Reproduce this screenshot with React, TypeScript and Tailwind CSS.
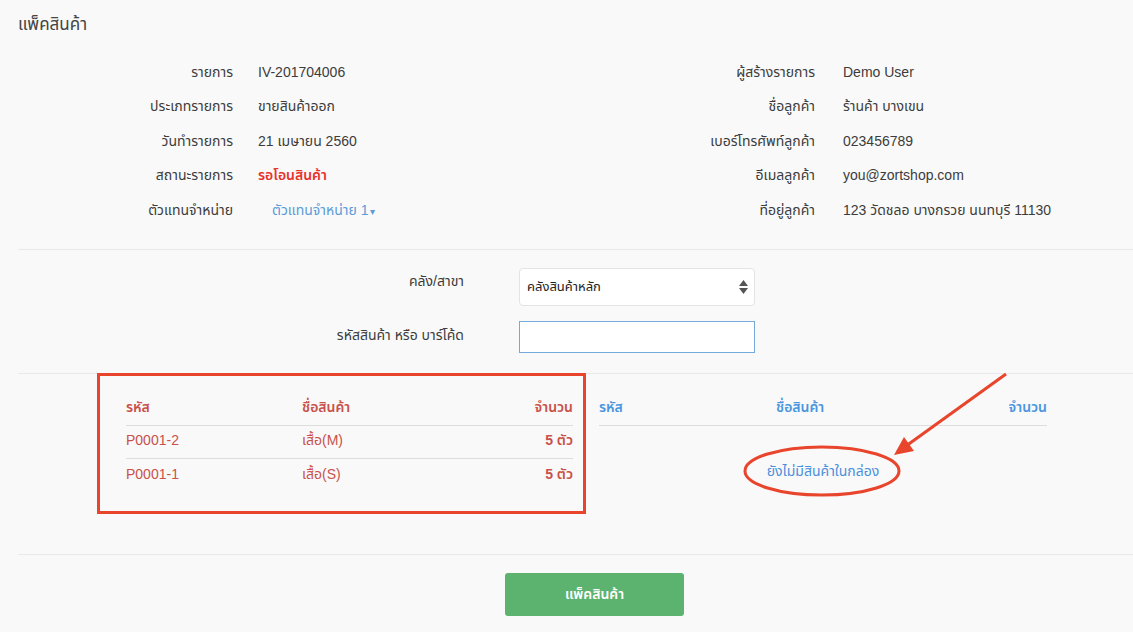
import React from 'react';

const font = { fontFamily: '"Liberation Sans", "Noto Sans", "Noto Sans Thai", sans-serif' };

const leftInfo: [string, React.ReactNode][] = [
    ['รายการ', 'IV-201704006'],
    ['ประเภทรายการ', 'ขายสินค้าออก'],
    ['วันทำรายการ', '21 เมษายน 2560'],
    ['สถานะรายการ', <span className="font-semibold text-[#e8322c]">รอโอนสินค้า</span>],
    [
        'ตัวแทนจำหน่าย',
        <span className="pl-[14px] text-[#5b9bd8]">
            ตัวแทนจำหน่าย 1<span className="ml-[2px] text-[10px] align-middle">▾</span>
        </span>,
    ],
];

const rightInfo: [string, string][] = [
    ['ผู้สร้างรายการ', 'Demo User'],
    ['ชื่อลูกค้า', 'ร้านค้า บางเขน'],
    ['เบอร์โทรศัพท์ลูกค้า', '023456789'],
    ['อีเมลลูกค้า', 'you@zortshop.com'],
    ['ที่อยู่ลูกค้า', '123 วัดชลอ บางกรวย นนทบุรี 11130'],
];

const items = [
    { code: 'P0001-2', name: 'เสื้อ(M)', qty: '5 ตัว' },
    { code: 'P0001-1', name: 'เสื้อ(S)', qty: '5 ตัว' },
];

function InfoRow({ label, value, labelWidth, gap }: { label: string; value: React.ReactNode; labelWidth: string; gap: string }) {
    return (
        <div className="flex h-[34.5px] items-center">
            <div className={`${labelWidth} text-right`}>{label}</div>
            <div className={gap}>{value}</div>
        </div>
    );
}

export default function App() {
    return (
        <div className="relative h-[632px] w-[1133px] overflow-hidden bg-[#f9f9f9] text-[14px] text-[#3c3c3c]" style={font}>
            <div className="pl-[18px]">
                <h1 className="pt-[15px] text-[17px] leading-[20px] text-[#444]">แพ็คสินค้า</h1>

                {/* info */}
                <div className="mt-[20px] flex">
                    <div className="w-[548px]">
                        {leftInfo.map(([l, v]) => (
                            <InfoRow key={l} label={l} value={v} labelWidth="w-[215px]" gap="ml-[25px]" />
                        ))}
                    </div>
                    <div>
                        {rightInfo.map(([l, v]) => (
                            <InfoRow key={l} label={l} value={v} labelWidth="w-[249px]" gap="ml-[28px]" />
                        ))}
                    </div>
                </div>

                <div className="mt-[21px] h-px bg-[#e9e9e9]" />

                {/* form */}
                <div className="pt-[18px]">
                    <div className="flex h-[38px]">
                        <div className="w-[446px] pt-[3px] text-right">คลัง/สาขา</div>
                        <div className="ml-[55px] flex w-[236px] items-center justify-between rounded-[4px] border border-[#e4e4e4] bg-white pl-[7px] pr-[6px] text-[13px] text-[#222]">
                            <span>คลังสินค้าหลัก</span>
                            <svg width="9" height="14" viewBox="0 0 9 14">
                                <path d="M4.5 0L9 6H0z" fill="#555" />
                                <path d="M0 8h9l-4.5 6z" fill="#555" />
                            </svg>
                        </div>
                    </div>
                    <div className="mt-[15px] flex h-[32px]">
                        <div className="w-[446px] pt-[4px] text-right">รหัสสินค้า หรือ บาร์โค้ด</div>
                        <div className="ml-[55px] w-[236px] border border-[#74a9dc] bg-white" />
                    </div>
                </div>

                <div className="mt-[20px] h-px bg-[#e9e9e9]" />

                {/* tables */}
                <div className="flex pl-[108px] pt-[18px]">
                    <div className="w-[447px] text-[#c9514a]">
                        <div className="flex h-[34px] items-center border-b border-[#dddddd] pb-[2px] font-semibold">
                            <span className="w-[176px]">รหัส</span>
                            <span className="flex-1">ชื่อสินค้า</span>
                            <span>จำนวน</span>
                        </div>
                        {items.map((it, i) => (
                            <div
                                key={it.code}
                                className={`flex h-[33px] items-center pb-[2px] ${i < items.length - 1 ? 'border-b border-[#dddddd]' : ''}`}
                            >
                                <span className="w-[176px]">{it.code}</span>
                                <span className="flex-1">{it.name}</span>
                                <span className="font-semibold">{it.qty}</span>
                            </div>
                        ))}
                    </div>
                    <div className="ml-[26px] w-[448px] text-[#4a96e0]">
                        <div className="flex h-[34px] items-center border-b border-[#dddddd] pb-[2px] font-semibold">
                            <span className="w-[177px]">รหัส</span>
                            <span className="flex-1">ชื่อสินค้า</span>
                            <span>จำนวน</span>
                        </div>
                        <div className="pt-[35px] text-center text-[#4a8fdc]">ยังไม่มีสินค้าในกล่อง</div>
                    </div>
                </div>

                <div className="mt-[62px] h-px bg-[#e9e9e9]" />

                <div className="pl-[487px] pt-[18px]">
                    <button className="h-[43px] w-[179px] rounded-[3px] bg-[#5cb370] text-[14px] font-semibold text-white">
                        แพ็คสินค้า
                    </button>
                </div>
            </div>

            {/* annotations */}
            <div className="absolute left-[97px] top-[373px] h-[141px] w-[489px] border-[3px] border-[#e8452c]" />
            <svg className="pointer-events-none absolute inset-0" width="1133" height="632">
                <ellipse cx="822" cy="471" rx="77" ry="24" fill="none" stroke="#e8452c" strokeWidth="3" />
                <line x1="1006" y1="374" x2="906" y2="446" stroke="#e8452c" strokeWidth="3" />
                <path d="M894 455L904 437L914 451z" fill="#e8452c" />
            </svg>
        </div>
    );
}
